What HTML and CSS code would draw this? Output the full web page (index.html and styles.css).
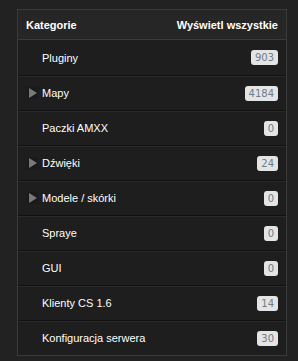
FILE: index.html
```html
<!DOCTYPE html>
<html lang="pl">

<head>
  <meta charset="UTF-8">
  <meta name="viewport" content="width=device-width, initial-scale=1.0">
  <title>Kategorie</title>
  <link rel="stylesheet" href="styles.css">
</head>

<body>
  <!-- Category list panel -->
  <div class="panel">
    <div class="panel-head">
      <span>Kategorie</span>
      <a href="#" class="show-all">Wyświetl wszystkie</a>
    </div>

    <ul class="cats">
      <li class="cat"><span class="name">Pluginy</span><span class="badge">903</span></li>
      <li class="cat has-sub"><span class="toggle"></span><span class="name">Mapy</span><span class="badge">4184</span></li>
      <li class="cat"><span class="name">Paczki AMXX</span><span class="badge">0</span></li>
      <li class="cat has-sub"><span class="toggle"></span><span class="name">Dźwięki</span><span class="badge">24</span></li>
      <li class="cat has-sub"><span class="toggle"></span><span class="name">Modele / skórki</span><span class="badge">0</span></li>
      <li class="cat"><span class="name">Spraye</span><span class="badge">0</span></li>
      <li class="cat"><span class="name">GUI</span><span class="badge">0</span></li>
      <li class="cat"><span class="name">Klienty CS 1.6</span><span class="badge">14</span></li>
      <li class="cat"><span class="name">Konfiguracja serwera</span><span class="badge">30</span></li>
    </ul>
  </div>
</body>

</html>
```

FILE: styles.css
```css
/* Page background */
body {
  margin: 0;
  padding: 9px 11px 0 17px;
  background: #222222;
  font-family: 'Liberation Sans', Arial, sans-serif;
  font-size: 11px;
  color: #ffffff;
}

/* Panel box */
.panel {
  width: 268px;
  background: #1e1e1e;
  border: 1px solid #3a3a3a;
}

/* Header row */
.panel-head {
  display: flex;
  justify-content: space-between;
  align-items: center;
  height: 29px;
  padding: 0 8px;
  background: #262626;
  border-bottom: 1px solid #3a3a3a;
  font-weight: bold;
}

.show-all {
  color: #ffffff;
  text-decoration: none;
}

/* Category list */
.cats {
  list-style: none;
  margin: 0;
  padding: 0;
}

.cat {
  display: flex;
  align-items: center;
  height: 34px;
  padding: 0 8px 0 24px;
  border-top: 1px solid #111111;
}

.cat:first-child {
  border-top: none;
  height: 35px;
}

.cat + .cat {
  box-shadow: inset 0 1px 0 #2a2a2a;
}

.cat.has-sub {
  padding-left: 9px;
}

/* Expand arrow */
.toggle {
  width: 11px;
  height: 12px;
  margin-right: 4px;
  background: #1a1a1a;
  position: relative;
}

.toggle::after {
  content: '';
  position: absolute;
  left: 2px;
  top: 1px;
  border-left: 8px solid #7a7a7a;
  border-top: 5px solid transparent;
  border-bottom: 5px solid transparent;
}

.name {
  flex: 1;
}

/* Count badge */
.badge {
  background: #e4e4e4;
  color: #6f7c8a;
  font-family: 'DejaVu Sans', Verdana, sans-serif;
  font-size: 10px;
  line-height: 15px;
  padding: 0 4px;
  border-radius: 3px;
}
```
